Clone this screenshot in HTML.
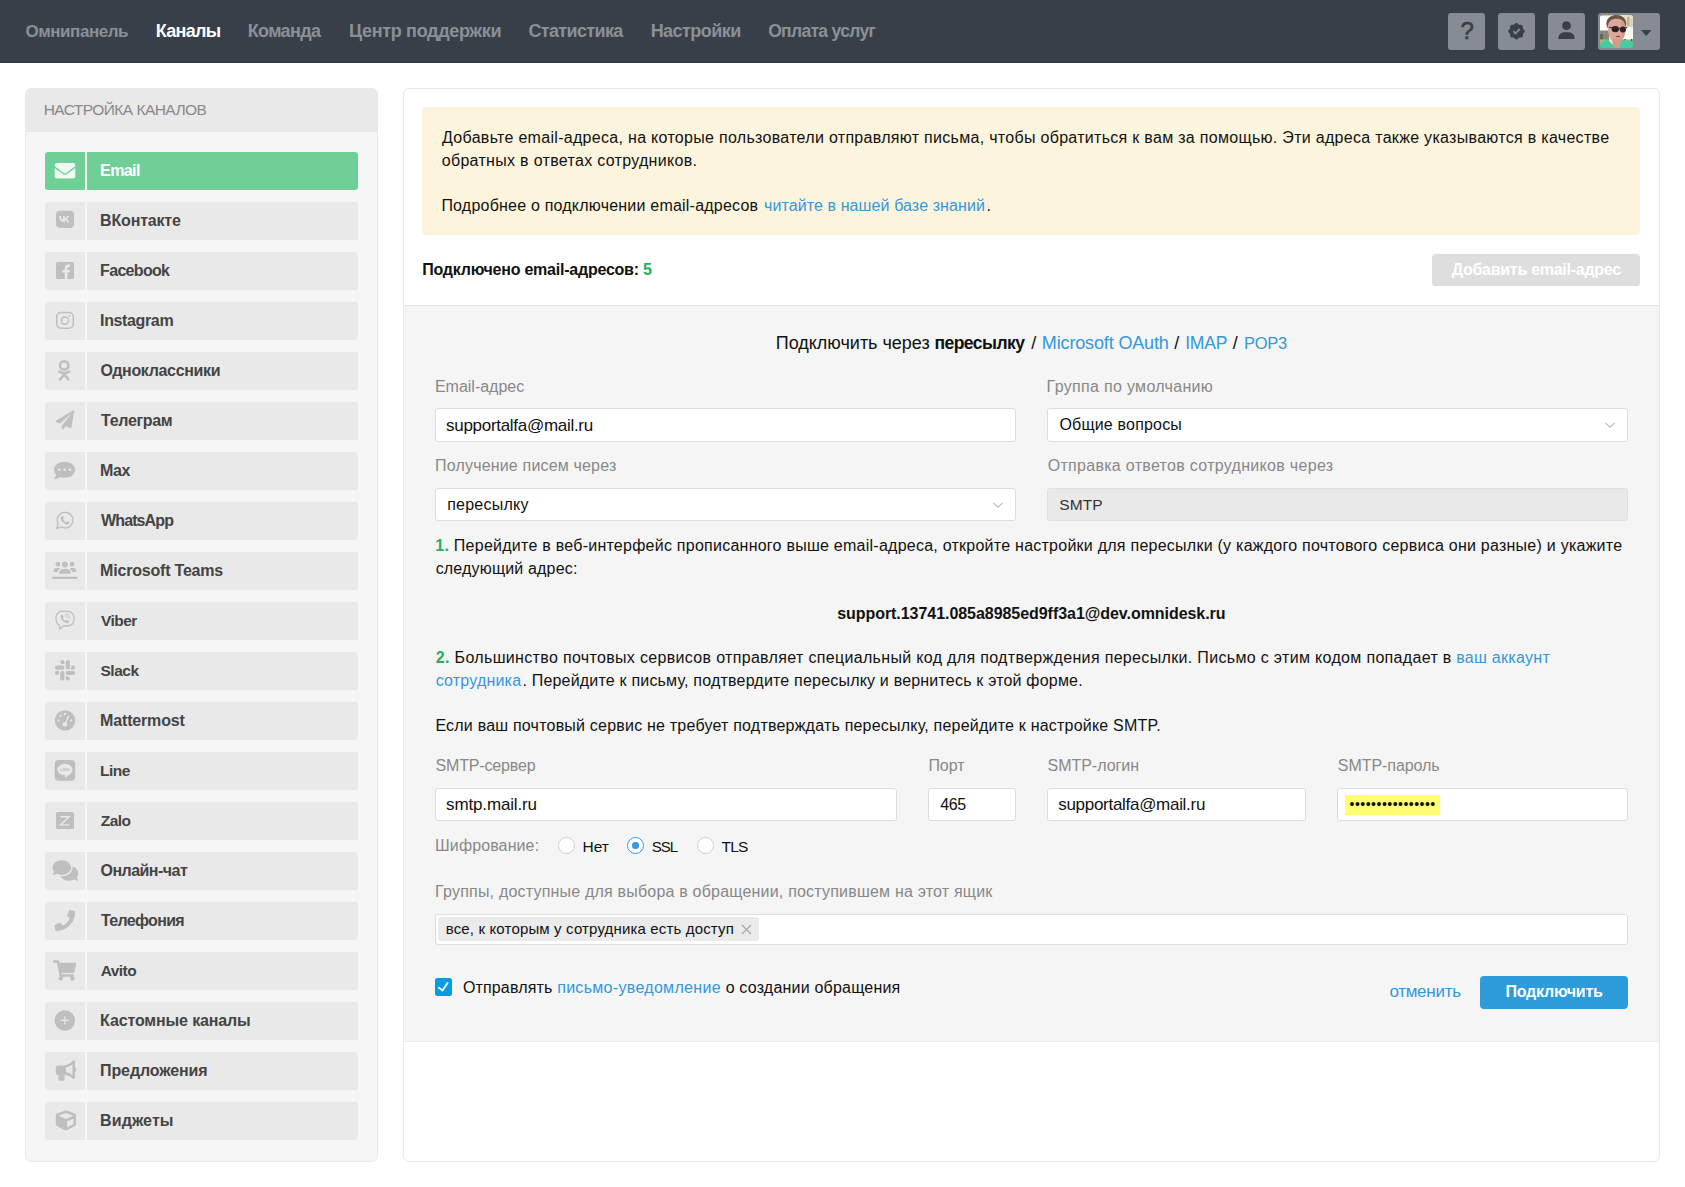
<!DOCTYPE html>
<html lang="ru">
<head>
<meta charset="utf-8">
<title>Каналы — Email</title>
<style>
*{box-sizing:border-box;margin:0;padding:0}
html,body{width:1685px;height:1187px;overflow:hidden;background:#fff}
body{position:relative;font-family:"Liberation Sans",sans-serif;font-size:16px;color:#111;line-height:23px}
a{color:#3498db;text-decoration:none}
.abs{position:absolute;white-space:nowrap}
/* header */
#hdr{position:absolute;left:0;top:0;width:1685px;height:63px;background:#393f49;border-bottom:1px solid #2f343c}
#hdr .nav{position:absolute;top:19px;font-size:18px;font-weight:bold;color:#8b9098;line-height:24px;white-space:nowrap}
#hdr .nav.on{color:#fff}
.hb{position:absolute;top:13px;width:37px;height:37px;background:#868b94;border-radius:3px}
/* sidebar */
#side{position:absolute;left:25px;top:88px;width:353px;height:1074px;background:#f6f6f6;border:1px solid #e9e9e9;border-radius:6px;overflow:hidden}
#side .sh{position:absolute;left:-1px;top:-1px;width:353px;height:44px;background:#e9e9e9}
#side .sh span{position:absolute;left:19px;top:10px;font-size:16px;color:#888;line-height:24px;white-space:nowrap}
.it{position:absolute;left:45px;width:313px;height:38px}
.it .ic{position:absolute;left:0;top:0;width:40px;height:38px;background:#e9e9e9;border-radius:3px 0 0 3px}
.it .tx{position:absolute;left:42px;top:0;width:271px;height:38px;background:#e9e9e9;border-radius:0 3px 3px 0}
.it .tx span{position:absolute;left:13px;top:7px;font-weight:bold;font-size:16px;color:#444;line-height:24px;white-space:nowrap}
.it.on .ic,.it.on .tx{background:#6fcf97}
.it.on .tx span{color:#fff}
.it svg{position:absolute;left:0;top:0;width:40px;height:38px}
/* main */
#main{position:absolute;left:403px;top:88px;width:1257px;height:1074px;background:#fff;border:1px solid #e8e8e8;border-radius:6px}
#note{position:absolute;left:422px;top:107px;width:1218px;height:128px;background:#fcf4dc;border-radius:4px}
#gray{position:absolute;left:404px;top:305px;width:1255px;height:737px;background:#f5f5f5;border-top:1px solid #e5e5e5;border-bottom:1px solid #ededed}
.lbl{position:absolute;white-space:nowrap;color:#888;font-size:16px;line-height:24px}
.inp{position:absolute;height:33px;background:#fff;border:1px solid #ddd;border-radius:3px}
.inp span{position:absolute;left:10px;top:4px;font-size:16px;line-height:24px;color:#111;white-space:nowrap}
.p{position:absolute;white-space:nowrap;font-size:16px;line-height:23px;color:#111}
.g{color:#27ae60;font-weight:bold}
.hd{position:absolute;top:331px;white-space:nowrap;font-size:18px;line-height:24px;color:#111}
.chev{position:absolute;right:11px;top:12px;width:12px;height:8px}
.rad{position:absolute;width:17px;height:17px;border:1px solid #d0d0d0;border-radius:50%;background:#fff}
.rad.on{border-color:#3498db}
.rad.on i{position:absolute;left:4.200px;top:4.200px;width:6.600px;height:6.600px;border-radius:50%;background:#3498db}
</style>
</head>
<body>
<div id="hdr">
<span class="nav" id="n1" style="letter-spacing:-0.453px;font-size:17px;left:25.39px;top:20px">Омнипанель</span>
<span class="nav on" id="n2" style="letter-spacing:-0.700px;font-size:18px;left:155.67px">Каналы</span>
<span class="nav" id="n3" style="letter-spacing:-0.630px;font-size:18px;left:247.67px">Команда</span>
<span class="nav" id="n4" style="letter-spacing:-0.334px;font-size:18px;left:349.07px">Центр поддержки</span>
<span class="nav" id="n5" style="letter-spacing:-0.645px;font-size:18px;left:528.48px">Статистика</span>
<span class="nav" id="n6" style="letter-spacing:-0.535px;font-size:18px;left:650.67px">Настройки</span>
<span class="nav" id="n7" style="letter-spacing:-0.689px;font-size:17.5px;left:768.19px">Оплата услуг</span>
<!--HDRBTNS-->
<div class="hb" style="left:1448px"><span id="q" style="position:absolute;left:.700px;top:4px;width:37px;text-align:center;font-size:24px;line-height:28px;color:#393f49;-webkit-text-stroke:.6px #393f49">?</span></div>
<div class="hb" style="left:1498px"><svg viewBox="0 0 37 37" style="position:absolute;left:0;top:0;width:37px;height:37px"><path fill="#393f49" d="M26.75 18.20L26.71 18.52L26.61 18.84L26.45 19.14L26.24 19.43L26.00 19.69L25.76 19.94L25.52 20.18L25.31 20.41L25.14 20.65L25.01 20.90L24.93 21.16L24.88 21.45L24.87 21.77L24.86 22.10L24.86 22.45L24.84 22.81L24.78 23.15L24.69 23.48L24.54 23.78L24.33 24.03L24.08 24.24L23.78 24.39L23.45 24.48L23.11 24.54L22.75 24.56L22.40 24.56L22.07 24.57L21.75 24.58L21.46 24.63L21.20 24.71L20.95 24.84L20.71 25.01L20.48 25.22L20.24 25.46L19.99 25.70L19.73 25.94L19.44 26.15L19.14 26.31L18.82 26.41L18.50 26.45L18.18 26.41L17.86 26.31L17.56 26.15L17.27 25.94L17.01 25.70L16.76 25.46L16.52 25.22L16.29 25.01L16.05 24.84L15.80 24.71L15.54 24.63L15.25 24.58L14.93 24.57L14.60 24.56L14.25 24.56L13.89 24.54L13.55 24.48L13.22 24.39L12.92 24.24L12.67 24.03L12.46 23.78L12.31 23.48L12.22 23.15L12.16 22.81L12.14 22.45L12.14 22.10L12.13 21.77L12.12 21.45L12.07 21.16L11.99 20.90L11.86 20.65L11.69 20.41L11.48 20.18L11.24 19.94L11.00 19.69L10.76 19.43L10.55 19.14L10.39 18.84L10.29 18.52L10.25 18.20L10.29 17.88L10.39 17.56L10.55 17.26L10.76 16.97L11.00 16.71L11.24 16.46L11.48 16.22L11.69 15.99L11.86 15.75L11.99 15.50L12.07 15.24L12.12 14.95L12.13 14.63L12.14 14.30L12.14 13.95L12.16 13.59L12.22 13.25L12.31 12.92L12.46 12.62L12.67 12.37L12.92 12.16L13.22 12.01L13.55 11.92L13.89 11.86L14.25 11.84L14.60 11.84L14.93 11.83L15.25 11.82L15.54 11.77L15.80 11.69L16.05 11.56L16.29 11.39L16.52 11.18L16.76 10.94L17.01 10.70L17.27 10.46L17.56 10.25L17.86 10.09L18.18 9.99L18.50 9.95L18.82 9.99L19.14 10.09L19.44 10.25L19.73 10.46L19.99 10.70L20.24 10.94L20.48 11.18L20.71 11.39L20.95 11.56L21.20 11.69L21.46 11.77L21.75 11.82L22.07 11.83L22.40 11.84L22.75 11.84L23.11 11.86L23.45 11.92L23.78 12.01L24.08 12.16L24.33 12.37L24.54 12.62L24.69 12.92L24.78 13.25L24.84 13.59L24.86 13.95L24.86 14.30L24.87 14.63L24.88 14.95L24.93 15.24L25.01 15.50L25.14 15.75L25.31 15.99L25.52 16.22L25.76 16.46L26.00 16.71L26.24 16.97L26.45 17.26L26.61 17.56L26.71 17.88z"/><path d="M15.300 18.200l2.200 2.200 4.400-4.500" fill="none" stroke="#868b94" stroke-width="1.900"/></svg></div>
<div class="hb" style="left:1548px"><svg viewBox="0 0 37 37" style="position:absolute;left:0;top:0;width:37px;height:37px"><circle cx="18.500" cy="12.700" r="4.400" fill="#393f49"/><path d="M10.400 26v-.9c0-3.400 2.700-5.800 6-5.800h4.200c3.300 0 6 2.400 6 5.800v.9z" fill="#393f49"/></svg></div>
<div class="hb" style="left:1598px;width:62px"><svg viewBox="0 0 62 37" style="position:absolute;left:0;top:0;width:62px;height:37px"><defs><clipPath id="avc"><rect x="2" y="2" width="33" height="33" rx="2.500"/></clipPath><filter id="avb" x="-10%" y="-10%" width="120%" height="120%"><feGaussianBlur stdDeviation=".7"/></filter></defs>
<g clip-path="url(#avc)"><g filter="url(#avb)" transform="translate(2,2)">
<rect x="-2" y="-2" width="37" height="37" fill="#ebe8df"/>
<rect x="-2" y="-2" width="12" height="18" fill="#fefefd"/>
<rect x="-2" y="15.500" width="11" height="10" fill="#8c877b"/>
<rect x="-2" y="19" width="5" height="6" fill="#5f6a55"/>
<rect x="-2" y="24.500" width="10" height="8" fill="#b4b877"/>
<rect x="24" y="-2" width="11" height="14" fill="#e3e0c4"/>
<rect x="1" y="-.700" width="10" height="1.700" fill="#ead53a"/>
<rect x="27" y="2" width="2.500" height="9" fill="#b3b98a"/>
<rect x="30.500" y="4" width="2" height="8" fill="#d9c8d0"/>
<rect x="25" y="12" width="10" height="8" fill="#f6f4f1"/>
<rect x="21" y="20" width="14" height="4.500" fill="#fcfcfc"/>
<rect x="22" y="24.500" width="13" height="6" fill="#a9b36e"/>
<rect x="24.500" y="24" width="1.300" height="7" fill="#4f4b3c"/><rect x="31" y="24" width="1.300" height="7" fill="#4f4b3c"/>
<ellipse cx="16.300" cy="8.500" rx="10" ry="8.800" fill="#6b5644"/>
<path d="M7.800 12.500c0-6.300 3.700-8.700 8.700-8.700s9 2.500 9 9.200c0 6-2.300 13.800-8 13.800h-2.500c-4.500 0-7.200-7.300-7.200-14.300z" fill="#dda79a"/>
<path d="M21 6c3 1.500 4.500 4 4.500 8.500 0 4-1.200 8.500-3.500 11z" fill="#cf9386" opacity=".7"/>
<path d="M12.500 24h8.500v10h-8.500z" fill="#d39a88"/>
<ellipse cx="15.300" cy="14.100" rx="3.700" ry="3.200" fill="#2e2022"/>
<ellipse cx="22.900" cy="14.500" rx="3.100" ry="2.900" fill="#33242a"/>
<path d="M9 12.200l3.500.7M18.700 13.300l1.500.3M25.700 12.900l1.500-.6" stroke="#4a362c" stroke-width="1.100" fill="none"/>
<ellipse cx="18.100" cy="21.600" rx="2.400" ry=".75" fill="#b3343f"/>
<path d="M-2 35v-5.500c3-1 6-4 9.500-4.800 2 .5 4.500 4.500 8.500 10.300zM35 35v-7.500c-2-1.800-4-2-5.500-1-2.500-1-5.500-2.500-8-1.500-1 2.500-1.800 6-1.500 10z" fill="#46cba3"/>
</g></g><path d="M43 17h10.400l-5.200 6z" fill="#393f49"/></svg></div>
<!--/HDRBTNS-->
</div>

<div id="side">
<div class="sh"><span id="sh1" style="letter-spacing:-0.543px;font-size:15.5px;left:18.63px">НАСТРОЙКА КАНАЛОВ</span></div>
</div>
<!--ITEMS-->
<div class="it on" style="top:152px"><div class="ic"><svg viewBox="0 0 40 38"><path transform="translate(9.70,8.50) scale(0.04023,0.04023)" fill="#eef9f2" d="M502.3 190.8c3.9-3.1 9.7-.2 9.7 4.7V400c0 26.500-21.500 48-48 48H48c-26.500 0-48-21.500-48-48V195.600c0-5 5.700-7.800 9.700-4.700 22.400 17.400 52.100 39.500 154.100 113.600 21.100 15.400 56.700 47.800 92.200 47.600 35.700.300 72-32.800 92.300-47.600 102-74.100 131.600-96.300 154-113.700zM256 320c23.200.400 56.600-29.200 73.400-41.400 132.700-96.300 142.800-104.700 173.400-128.700 5.800-4.500 9.200-11.500 9.200-18.900v-19c0-26.500-21.500-48-48-48H48C21.500 64 0 85.500 0 112v19c0 7.400 3.400 14.300 9.200 18.900 30.600 23.900 40.700 32.400 173.400 128.700 16.800 12.200 50.200 41.800 73.400 41.400z"/></svg></div><div class="tx"><span id="s0" style="letter-spacing:-0.595px;font-size:16px;left:13.09px">Email</span></div></div>
<div class="it" style="top:202px"><div class="ic"><svg viewBox="0 0 40 38"><rect x="11" y="8.800" width="18" height="17.100" rx="3.800" fill="#bfbfbf"/><path d="M14 14.100h1.900c.1 2.600 1.200 3.700 2.100 3.900v-3.900h1.800v2.250c.9-.1 1.900-1.100 2.200-2.250h1.800c-.3 1.500-1.400 2.600-2.200 3.050.8.400 2.100 1.350 2.600 3.150h-2c-.4-1.200-1.300-2.100-2.400-2.250v2.250h-.2c-3.500 0-5.500-2.400-5.600-6.200z" fill="#e9e9e9"/></svg></div><div class="tx"><span id="s1" style="letter-spacing:-0.173px;font-size:16px;left:13.09px">ВКонтакте</span></div></div>
<div class="it" style="top:252px"><div class="ic"><svg viewBox="0 0 40 38"><rect x="11" y="10" width="18" height="17" rx="1.500" fill="#bfbfbf"/><path d="M22.400 27v-6.500h2.200l.4-2.600h-2.600v-1.600c0-.8.300-1.400 1.400-1.400h1.300v-2.300c-.3 0-1.100-.1-2-.1-2.100 0-3.400 1.300-3.400 3.500v1.900h-2.300v2.600h2.300V27z" fill="#e9e9e9"/></svg></div><div class="tx"><span id="s2" style="letter-spacing:-0.686px;font-size:16px;left:13.09px">Facebook</span></div></div>
<div class="it" style="top:302px"><div class="ic"><svg viewBox="0 0 40 38"><rect x="11.700" y="10.600" width="16.600" height="15.700" rx="4.200" fill="none" stroke="#bfbfbf" stroke-width="1.500"/><circle cx="19.900" cy="18.600" r="3.600" fill="none" stroke="#bfbfbf" stroke-width="1.500"/><circle cx="24.400" cy="14" r="1" fill="#bfbfbf"/></svg></div><div class="tx"><span id="s3" style="letter-spacing:-0.364px;font-size:16px;left:13.09px">Instagram</span></div></div>
<div class="it" style="top:352px"><div class="ic"><svg viewBox="0 0 40 38"><circle cx="19.200" cy="13.400" r="4.200" fill="none" stroke="#bfbfbf" stroke-width="2.500"/><path d="M14.100 19.500q5.100 3.200 10.200 0M19.200 21.600v1M19.200 22l-4.100 5.500M19.200 22l4.100 5.500" fill="none" stroke="#bfbfbf" stroke-width="2.500" stroke-linecap="round"/></svg></div><div class="tx"><span id="s4" style="letter-spacing:-0.334px;font-size:16px;left:13.53px">Одноклассники</span></div></div>
<div class="it" style="top:402px"><div class="ic"><svg viewBox="0 0 40 38"><path transform="translate(10.60,8.60) scale(0.03613,0.03633)" fill="#bfbfbf" d="M476 3.200L12.500 270.600c-18.100 10.400-15.800 35.600 2.200 43.200L121 358.400l287.300-253.200c5.500-4.900 13.300 2.600 8.600 8.300L176 407v80.500c0 23.600 28.500 32.900 42.500 15.800L282 426l124.600 52.200c14.200 6 30.400-2.900 33-18.200l72-432C515 7.800 493.300-6.800 476 3.200z"/></svg></div><div class="tx"><span id="s5" style="letter-spacing:-0.317px;font-size:16px;left:14.00px">Телеграм</span></div></div>
<div class="it" style="top:452px"><div class="ic"><svg viewBox="0 0 40 38"><path transform="translate(8.90,8.60) scale(0.04160,0.03848)" fill="#bfbfbf" d="M256 32C114.600 32 0 125.100 0 240c0 49.600 21.400 95 57 130.700C44.500 421.100 2.700 466 2.200 466.500c-2.200 2.300-2.800 5.700-1.500 8.700S4.800 480 8 480c66.300 0 116-31.800 140.600-51.400 32.700 12.300 69 19.400 107.400 19.400 141.400 0 256-93.100 256-208S397.400 32 256 32zM128 272c-17.700 0-32-14.300-32-32s14.300-32 32-32 32 14.300 32 32-14.300 32-32 32zm128 0c-17.700 0-32-14.300-32-32s14.300-32 32-32 32 14.300 32 32-14.300 32-32 32zm128 0c-17.700 0-32-14.300-32-32s14.300-32 32-32 32 14.300 32 32-14.300 32-32 32z"/></svg></div><div class="tx"><span id="s6" style="letter-spacing:-0.436px;font-size:16px;left:13.09px">Max</span></div></div>
<div class="it" style="top:502px"><div class="ic"><svg viewBox="0 0 40 38"><path d="M20.200 10.300a7.800 7.800 0 1 1-3.800 14.600l-4.700 1.500 1.500-4.500a7.800 7.800 0 0 1 7-11.600z" fill="none" stroke="#bfbfbf" stroke-width="1.300" stroke-linejoin="round"/><path d="M16.800 14.300c.3-.3.900-.3 1.100.1l.8 1.500c.2.300.1.700-.1.900l-.5.600c.7 1.400 1.700 2.400 3.100 3l.6-.6c.3-.3.600-.3.900-.2l1.500.8c.4.200.5.700.2 1.100-.6.900-1.600 1.300-2.700 1-3-.9-5.100-3-6-6-.2-.8.200-1.600 1.100-2.200z" fill="#bfbfbf"/></svg></div><div class="tx"><span id="s7" style="letter-spacing:-0.890px;font-size:16px;left:14.05px">WhatsApp</span></div></div>
<div class="it" style="top:552px"><div class="ic"><svg viewBox="0 0 40 38"><circle cx="19.900" cy="12.600" r="3" fill="#bfbfbf"/><circle cx="13" cy="12.200" r="2.400" fill="#bfbfbf"/><circle cx="27" cy="12.200" r="2.400" fill="#bfbfbf"/><path d="M14.200 21.800v-1c0-2.200 1.800-3.700 4-3.700h3.500c2.200 0 4 1.500 4 3.700v1z" fill="#bfbfbf"/><path d="M8.500 20v-1.200c0-1.700 1.300-2.900 3-2.900h2.400c.5 0 1 .1 1.400.4-1.400.8-2.300 2.100-2.400 3.700zM31.300 20v-1.200c0-1.700-1.300-2.900-3-2.900h-2.400c-.5 0-1 .1-1.400.4 1.400.8 2.300 2.100 2.400 3.700z" fill="#bfbfbf"/><rect x="7.200" y="24.800" width="25.300" height="2.200" rx=".6" fill="#bfbfbf"/></svg></div><div class="tx"><span id="s8" style="letter-spacing:-0.202px;font-size:16px;left:13.09px">Microsoft Teams</span></div></div>
<div class="it" style="top:602px"><div class="ic"><svg viewBox="0 0 40 38"><path d="M20 9.200c-4.500 0-8.300.7-8.900 5.200-.4 3.200-.3 6.900 2.900 8.400.3.100.5.400.5.700v2.900c0 .5.600.8 1 .4l2.800-2.900c.6.050 1.100.1 1.700.1 4.500 0 8.300-.7 8.900-5.200.7-5.400-.4-9.600-8.900-9.600z" fill="none" stroke="#bfbfbf" stroke-width="1.300" stroke-linejoin="round"/><path d="M16.500 12.800c.3-.3.900-.3 1.100.1l.9 1.500c.2.300.1.700-.1.900l-.6.600c.7 1.400 1.700 2.400 3.100 3l.6-.6c.3-.3.600-.3.900-.2l1.500.9c.4.200.5.700.2 1.100-.6.900-1.600 1.300-2.700 1-3-.9-5.100-3-6-6-.2-.8.200-1.700 1.100-2.300z" fill="#bfbfbf"/><path d="M20.600 11.900c2.300.2 3.900 1.800 4.100 4.100M20.800 13.700c1.100.2 1.800.9 2 2" fill="none" stroke="#bfbfbf" stroke-width=".9" stroke-linecap="round"/></svg></div><div class="tx"><span id="s9" style="letter-spacing:-0.501px;font-size:15.5px;left:13.88px">Viber</span></div></div>
<div class="it" style="top:652px"><div class="ic"><svg viewBox="0 0 40 38"><rect x="20.7" y="7.9" width="4.20" height="9.70" rx="2.10" fill="#bfbfbf"/><rect x="9.9" y="13.6" width="9.50" height="4.10" rx="2.05" fill="#bfbfbf"/><rect x="20.7" y="18.9" width="9.50" height="4.10" rx="2.05" fill="#bfbfbf"/><rect x="15.2" y="18.9" width="4.20" height="9.80" rx="2.10" fill="#bfbfbf"/><circle cx="17.3" cy="10.1" r="2.05" fill="#bfbfbf"/><rect x="17.30" y="10.10" width="2.05" height="2.05" fill="#bfbfbf"/><circle cx="28" cy="15.6" r="2.05" fill="#bfbfbf"/><rect x="25.95" y="15.60" width="2.05" height="2.05" fill="#bfbfbf"/><circle cx="12" cy="20.9" r="2.05" fill="#bfbfbf"/><rect x="12.00" y="18.85" width="2.05" height="2.05" fill="#bfbfbf"/><circle cx="22.8" cy="26.5" r="2.05" fill="#bfbfbf"/><rect x="20.75" y="24.45" width="2.05" height="2.05" fill="#bfbfbf"/></svg></div><div class="tx"><span id="s10" style="letter-spacing:-0.466px;font-size:15.5px;left:13.51px">Slack</span></div></div>
<div class="it" style="top:702px"><div class="ic"><svg viewBox="0 0 40 38"><circle cx="20" cy="18.450" r="10.200" fill="#bfbfbf"/><circle cx="13.700" cy="18.600" r="1.150" fill="#e9e9e9"/><circle cx="15.500" cy="13.900" r="1.150" fill="#e9e9e9"/><circle cx="19.900" cy="12" r="1.150" fill="#e9e9e9"/><circle cx="26.200" cy="18.600" r="1.150" fill="#e9e9e9"/><path d="M23.400 14.100l-3 7.800" stroke="#e9e9e9" stroke-width="1.400" stroke-linecap="round"/><circle cx="19.900" cy="22.300" r="2.300" fill="#e9e9e9"/></svg></div><div class="tx"><span id="s11" style="letter-spacing:-0.169px;font-size:16px;left:13.09px">Mattermost</span></div></div>
<div class="it" style="top:752px"><div class="ic"><svg viewBox="0 0 40 38"><rect x="9.700" y="7.900" width="20.500" height="20.800" rx="3.800" fill="#bfbfbf"/><path d="M19.900 12.100c4.200 0 7.600 2.500 7.600 5.600 0 1.300-.5 2.400-1.500 3.500-1.500 1.700-4.700 3.800-5.500 4.100-.8.300-.7-.2-.6-.4l.1-.7c0-.2.100-.5 0-.7-.1-.2-.4-.3-.7-.4-3.900-.5-6.900-2.800-6.900-5.400 0-3.100 3.400-5.600 7.500-5.600z" fill="#e9e9e9"/><text x="19.900" y="19.300" text-anchor="middle" font-family="Liberation Sans, sans-serif" font-weight="bold" font-size="4.200" fill="#bfbfbf">LINE</text></svg></div><div class="tx"><span id="s12" style="letter-spacing:-0.513px;font-size:15.5px;left:13.11px">Line</span></div></div>
<div class="it" style="top:802px"><div class="ic"><svg viewBox="0 0 40 38"><rect x="11" y="9.900" width="18" height="17.100" rx="1.500" fill="#bfbfbf"/><path d="M15.400 14.700h8.700l-8.500 8.200h8.900" fill="none" stroke="#e9e9e9" stroke-width="1.400" stroke-linejoin="miter"/></svg></div><div class="tx"><span id="s13" style="letter-spacing:-0.535px;font-size:15.5px;left:13.74px">Zalo</span></div></div>
<div class="it" style="top:852px"><div class="ic"><svg viewBox="0 0 40 38"><path transform="translate(7.60,6.70) scale(0.04462,0.04590)" fill="#bfbfbf" d="M416 192c0-88.400-93.100-160-208-160S0 103.600 0 192c0 34.300 14.100 65.900 38 92-13.400 30.200-35.500 54.200-35.800 54.500-2.200 2.300-2.800 5.700-1.500 8.700S4.800 352 8 352c36.600 0 66.900-12.300 88.700-25 32.200 15.700 70.300 25 111.300 25 114.900 0 208-71.600 208-160zm122 220c23.900-26 38-57.700 38-92 0-66.900-53.500-124.200-129.300-148.100.9 6.600 1.300 13.300 1.300 20.100 0 105.900-107.700 192-240 192-10.800 0-21.300-.8-31.700-1.900C207.800 439.600 281.800 480 368 480c41 0 79.100-9.200 111.300-25 21.800 12.700 52.100 25 88.700 25 3.200 0 6.100-1.900 7.300-4.800 1.300-2.900.7-6.300-1.500-8.700-.3-.3-22.400-24.200-35.800-54.500z"/></svg></div><div class="tx"><span id="s14" style="letter-spacing:-0.532px;font-size:16px;left:13.53px">Онлайн-чат</span></div></div>
<div class="it" style="top:902px"><div class="ic"><svg viewBox="0 0 40 38"><path transform="translate(9.50,8.00) scale(0.04043,0.04082)" fill="#bfbfbf" d="M493.4 24.600l-104-24c-11.300-2.600-22.900 3.300-27.500 13.900l-48 112c-4.200 9.800-1.400 21.300 6.900 28l60.600 49.600c-36 76.700-98.900 140.500-177.200 177.200l-49.600-60.600c-6.800-8.300-18.200-11.100-28-6.900l-112 48C3.900 366.500-2 378.100.6 389.400l24 104C27.100 504.200 36.700 512 48 512c256.100 0 464-207.500 464-464 0-11.200-7.700-20.900-18.600-23.400z"/></svg></div><div class="tx"><span id="s15" style="letter-spacing:-0.682px;font-size:16px;left:14.00px">Телефония</span></div></div>
<div class="it" style="top:952px"><div class="ic"><svg viewBox="0 0 40 38"><path transform="translate(8.10,8.20) scale(0.04010,0.04004)" fill="#bfbfbf" d="M528.120 301.319l47.273-208C578.806 78.301 567.391 64 551.990 64H159.208l-9.166-44.810C147.758 8.021 137.930 0 126.529 0H24C10.745 0 0 10.745 0 24v16c0 13.255 10.745 24 24 24h69.883l70.248 343.435C147.325 417.100 136 435.222 136 456c0 30.928 25.072 56 56 56s56-25.072 56-56c0-15.674-6.447-29.835-16.824-40h209.647C430.447 426.165 424 440.326 424 456c0 30.928 25.072 56 56 56s56-25.072 56-56c0-22.172-12.888-41.332-31.579-50.405l5.517-24.276c3.413-15.018-8.002-29.319-23.403-29.319H218.117l-6.545-32h293.145c11.206 0 20.920-7.754 23.403-18.681z"/></svg></div><div class="tx"><span id="s16" style="letter-spacing:-0.531px;font-size:15.5px;left:13.63px">Avito</span></div></div>
<div class="it" style="top:1002px"><div class="ic"><svg viewBox="0 0 40 38"><circle cx="19.850" cy="18.450" r="10.250" fill="#bfbfbf"/><path d="M19.850 14.400v8.100M15.800 18.450h8.100" stroke="#e9e9e9" stroke-width="1.200"/></svg></div><div class="tx"><span id="s17" style="letter-spacing:-0.137px;font-size:16px;left:13.09px">Кастомные каналы</span></div></div>
<div class="it" style="top:1052px"><div class="ic"><svg viewBox="0 0 40 38"><path d="M28.300 8.200c.7-.5 1.600 0 1.600.8v6.500c.7.400 1.200 1.200 1.200 2.100s-.5 1.700-1.200 2.100v6.500c0 .8-.9 1.300-1.600.8-2.400-1.900-5-3.400-8.700-3.900v4.200c0 .9-.7 1.500-1.500 1.500h-3.300c-.8 0-1.500-.7-1.500-1.500V23h-.2c-1.300 0-2.300-1-2.300-2.300v-4.900c0-1.300 1-2.300 2.300-2.300h5.800c3.900-.4 6.800-2.300 9.400-5.300z" fill="#bfbfbf"/><path d="M27.500 12.200v11c-1.900-1.600-4.200-2.700-6.600-3.100v-4.800c2.400-.4 4.700-1.500 6.600-3.100z" fill="#e9e9e9"/></svg></div><div class="tx"><span id="s18" style="letter-spacing:-0.121px;font-size:16px;left:13.09px">Предложения</span></div></div>
<div class="it" style="top:1102px"><div class="ic"><svg viewBox="0 0 40 38"><path transform="translate(10.80,8.20) scale(0.03945,0.04004)" fill="#bfbfbf" d="M239.100 6.300l-208 78c-18.700 7-31.100 25-31.100 45v225.100c0 18.200 10.300 34.800 26.500 42.900l208 104c13.500 6.800 29.400 6.800 42.900 0l208-104c16.300-8.100 26.500-24.800 26.500-42.900V129.300c0-20-12.400-37.900-31.100-44.900l-208-78C262 2.200 250 2.200 239.100 6.300zM256 68.400l192 72v1.100l-192 78-192-78v-1.100l192-72zm32 356V275.500l160-65v133.900l-160 80z"/></svg></div><div class="tx"><span id="s19" style="letter-spacing:0.089px;font-size:16px;left:13.09px">Виджеты</span></div></div>
<!--/ITEMS-->

<div id="main"></div>
<div id="note"></div>
<!--NOTE-->
<span class="p" id="t1" style="letter-spacing:0.299px;font-size:16px;left:442.05px;top:126px">Добавьте email-адреса, на которые пользователи отправляют письма, чтобы обратиться к вам за помощью. Эти адреса также указываются в качестве</span>
<span class="p" id="t2" style="letter-spacing:0.308px;font-size:16px;left:441.73px;top:149px">обратных в ответах сотрудников.</span>
<span class="p" id="t3a" style="letter-spacing:0.211px;font-size:16px;left:441.40px;top:194px">Подробнее о подключении email-адресов</span>
<span class="p" id="t3b" style="letter-spacing:0.104px;font-size:16px;left:763.94px;top:194px"><a>читайте в нашей базе знаний</a></span>
<span class="p" id="t3c" style="left:986.500px;top:194px">.</span>
<span class="p" id="t4" style="letter-spacing:-0.227px;font-size:16px;left:422.19px;top:258px;font-weight:bold">Подключено email-адресов: <span class="g">5</span></span>
<div class="abs" style="left:1432px;top:254px;width:208px;height:32px;background:#dedede;border-radius:4px"></div>
<span class="p" id="t5" style="letter-spacing:-0.271px;font-size:16px;left:1451.65px;top:258px;font-weight:bold;color:#fff">Добавить email-адрес</span>
<!--/NOTE-->
<div id="gray"></div>
<!--FORM-->
<span class="hd" id="h1a" style="letter-spacing:-0.004px;font-size:18px;left:775.74px">Подключить через</span>
<span class="hd" id="h1b" style="letter-spacing:-0.544px;font-size:17.5px;left:934.47px;font-weight:bold">пересылку</span>
<span class="hd" id="h1c" style="letter-spacing:0.000px;font-size:18px;left:1031.22px">/</span>
<span class="hd" id="h1d" style="letter-spacing:-0.146px;font-size:18px;left:1041.84px"><a>Microsoft OAuth</a></span>
<span class="hd" id="h1e" style="letter-spacing:0.000px;font-size:18px;left:1174.32px">/</span>
<span class="hd" id="h1f" style="letter-spacing:-0.206px;font-size:17.5px;left:1185.20px"><a>IMAP</a></span>
<span class="hd" id="h1g" style="letter-spacing:0.000px;font-size:18px;left:1232.82px">/</span>
<span class="hd" id="h1h" style="letter-spacing:-0.287px;font-size:16.5px;left:1243.94px"><a>POP3</a></span>

<span class="lbl" id="l1" style="letter-spacing:-0.002px;font-size:16px;left:434.90px;top:375px">Email-адрес</span>
<div class="inp" style="left:435px;top:408px;width:581px;height:34px"><span id="i1" style="letter-spacing:-0.293px;font-size:17px;left:10.05px;top:5px">supportalfa@mail.ru</span></div>
<span class="lbl" id="l2" style="letter-spacing:0.317px;font-size:16px;left:1046.60px;top:375px">Группа по умолчанию</span>
<div class="inp" style="left:1047px;top:408px;width:581px;height:34px"><span id="i2" style="letter-spacing:0.179px;font-size:16px;left:11.45px">Общие вопросы</span><svg class="chev" viewBox="0 0 12 8"><path d="M1.500 1.800L6 6.200l4.500-4.400" fill="none" stroke="#bbb" stroke-width="1.100"/></svg></div>

<span class="lbl" id="l3" style="letter-spacing:0.172px;font-size:16px;left:435.10px;top:454px">Получение писем через</span>
<div class="inp" style="left:435px;top:488px;width:581px"><span id="i3" style="letter-spacing:0.241px;font-size:16px;left:11.16px">пересылку</span><svg class="chev" viewBox="0 0 12 8"><path d="M1.500 1.800L6 6.200l4.500-4.400" fill="none" stroke="#bbb" stroke-width="1.100"/></svg></div>
<span class="lbl" id="l4" style="letter-spacing:0.305px;font-size:16px;left:1047.65px;top:454px">Отправка ответов сотрудников через</span>
<div class="inp" style="left:1047px;top:488px;width:581px;background:#e9e9e9;border-color:#e0e0e0"><span id="i4" style="letter-spacing:0.043px;font-size:15.5px;left:11.32px;color:#333">SMTP</span></div>

<span class="p" id="p1" style="letter-spacing:0.248px;font-size:16px;left:435.33px;top:534px"><span class="g">1.</span> Перейдите в веб-интерфейс прописанного выше email-адреса, откройте настройки для пересылки (у каждого почтового сервиса они разные) и укажите</span>
<span class="p" id="p2" style="letter-spacing:0.163px;font-size:16px;left:435.71px;top:557px">следующий адрес:</span>
<span class="p" id="p3" style="letter-spacing:-0.049px;font-size:16px;left:837.16px;top:602px;font-weight:bold">support.13741.085a8985ed9ff3a1@dev.omnidesk.ru</span>
<span class="p" id="p4a" style="letter-spacing:0.330px;font-size:16px;left:435.84px;top:646px"><span class="g">2.</span> Большинство почтовых сервисов отправляет специальный код для подтверждения пересылки. Письмо с этим кодом попадает в</span>
<span class="p" id="p4b" style="letter-spacing:0.300px;font-size:16px;left:1456.16px;top:646px"><a>ваш аккаунт</a></span>
<span class="p" id="p5a" style="letter-spacing:0.196px;font-size:16px;left:435.71px;top:669px"><a>сотрудника</a></span>
<span class="p" id="p5b" style="letter-spacing:0.195px;font-size:16px;left:522.44px;top:669px">. Перейдите к письму, подтвердите пересылку и вернитесь к этой форме.</span>
<span class="p" id="p6" style="letter-spacing:0.210px;font-size:16px;left:435.40px;top:714px">Если ваш почтовый сервис не требует подтверждать пересылку, перейдите к настройке SMTP.</span>

<span class="lbl" id="l5" style="letter-spacing:-0.162px;font-size:16px;left:435.56px;top:754px">SMTP-сервер</span>
<span class="lbl" id="l6" style="letter-spacing:-0.044px;font-size:16px;left:928.40px;top:754px">Порт</span>
<span class="lbl" id="l7" style="letter-spacing:-0.034px;font-size:16px;left:1047.56px;top:754px">SMTP-логин</span>
<span class="lbl" id="l8" style="letter-spacing:-0.061px;font-size:16px;left:1337.86px;top:754px">SMTP-пароль</span>
<div class="inp" style="left:435px;top:788px;width:462px"><span id="i5" style="letter-spacing:-0.143px;font-size:17px;left:10.05px">smtp.mail.ru</span></div>
<div class="inp" style="left:928px;top:788px;width:88px"><span id="i6" style="letter-spacing:-0.348px;font-size:16px;left:11.23px">465</span></div>
<div class="inp" style="left:1047px;top:788px;width:259px"><span id="i7" style="letter-spacing:-0.293px;font-size:17px;left:10.25px">supportalfa@mail.ru</span></div>
<div class="inp" style="left:1337px;top:788px;width:291px"><div style="position:absolute;left:7px;top:6px;width:95px;height:20px;background:#ffff70"></div><span id="i8" style="letter-spacing:0.486px;font-size:14px;left:11.57px;top:3px">••••••••••••••••</span></div>

<span class="lbl" id="l9" style="letter-spacing:0.108px;font-size:16px;left:435.10px;top:834px">Шифрование:</span>
<div class="rad" style="left:558px;top:837px"></div>
<span class="p" id="r1" style="letter-spacing:0.067px;font-size:15.5px;left:582.43px;top:835px">Нет</span>
<div class="rad on" style="left:627px;top:837px"><i></i></div>
<span class="p" id="r2" style="letter-spacing:-1.069px;font-size:15px;left:651.83px;top:835px">SSL</span>
<div class="rad" style="left:697px;top:837px"></div>
<span class="p" id="r3" style="letter-spacing:-0.791px;font-size:15.5px;left:721.56px;top:835px">TLS</span>

<span class="lbl" id="l10" style="letter-spacing:0.200px;font-size:16px;left:435.10px;top:880px">Группы, доступные для выбора в обращении, поступившем на этот ящик</span>
<div class="inp" style="left:435px;top:914px;width:1193px;height:31px"></div>
<div class="abs" style="left:438px;top:917px;width:321px;height:24px;background:#ebebeb;border-radius:3px"></div>
<span class="abs" id="tg" style="letter-spacing:0.153px;font-size:15px;left:445.71px;top:917px;line-height:23px;color:#111">все, к которым у сотрудника есть доступ</span>
<svg class="abs" style="left:741px;top:923.500px;width:11px;height:11px" viewBox="0 0 11 11"><path d="M1 1l9 9M10 1l-9 9" stroke="#aaa" stroke-width="1.300" fill="none"/></svg>

<div class="abs" style="left:435px;top:978px;width:17px;height:18px;background:#009de0;border-radius:2.500px"><svg viewBox="0 0 17 18" style="position:absolute;left:0;top:0;width:17px;height:18px"><path d="M3.300 9.300l4.300 3.200L13 4.300" fill="none" stroke="#fff" stroke-width="1.900"/></svg></div>
<span class="p" id="c1a" style="letter-spacing:0.148px;font-size:16px;left:462.95px;top:976px">Отправлять</span>
<span class="p" id="c1b" style="letter-spacing:0.306px;font-size:16px;left:557.16px;top:976px"><a>письмо-уведомление</a></span>
<span class="p" id="c1c" style="letter-spacing:0.203px;font-size:16px;left:725.63px;top:976px">о создании обращения</span>
<span class="abs" id="c2" style="letter-spacing:-0.273px;font-size:17px;left:1389.39px;top:980px;line-height:24px"><a>отменить</a></span>
<div class="abs" style="left:1480px;top:976px;width:148px;height:33px;background:#2d9cdb;border-radius:4px"></div>
<span class="abs" id="c3" style="letter-spacing:-0.227px;font-size:16px;left:1505.49px;top:980px;line-height:24px;font-weight:bold;color:#fff">Подключить</span>
<!--/FORM-->
</body>
</html>
